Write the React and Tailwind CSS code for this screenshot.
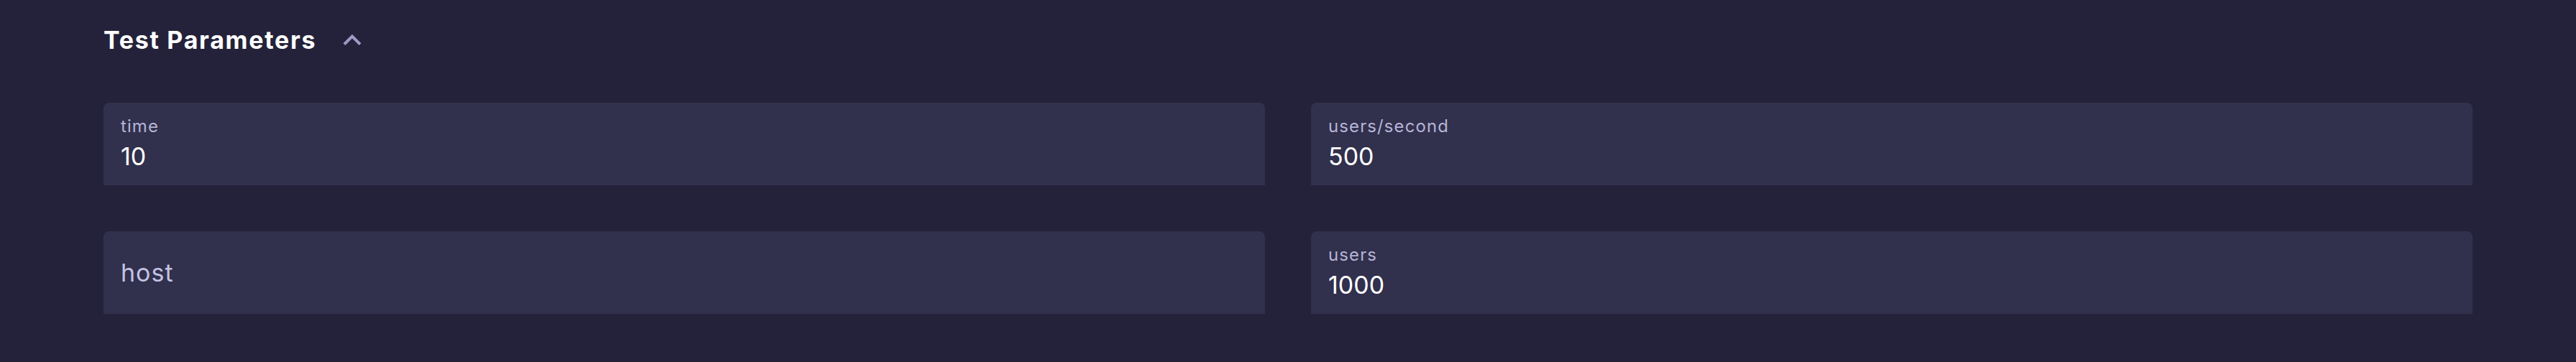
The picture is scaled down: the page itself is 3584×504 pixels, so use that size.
import React from "react";

const fields = [
  { label: "time", value: "10" },
  { label: "users/second", value: "500" },
  { label: "host", value: "" },
  { label: "users", value: "1000" },
];

function ExpandLess() {
  return (
    <svg viewBox="0 0 24 24" className="w-[50px] h-[50px] text-[#9d9bc4]" fill="currentColor">
      <path d="M12 8l-6 6 1.41 1.41L12 10.83l4.59 4.58L18 14z" />
    </svg>
  );
}

function Field({ label, value }) {
  // empty field shows the label as placeholder, like an unfocused filled input
  if (!value) {
    return (
      <div className="h-[115px] rounded-t-[8px] bg-[#31304d] px-6 pt-[41px]">
        <div className="text-[34px] leading-[34px] tracking-[1px] text-[#c4c2e2]">{label}</div>
      </div>
    );
  }
  return (
    <div className="h-[115px] rounded-t-[8px] bg-[#31304d] px-6 pt-[21px]">
      <div className="text-[24px] leading-[24px] tracking-[1.1px] text-[#b6b4d6]">{label}</div>
      <div className="mt-[13px] text-[34px] leading-[34px] text-white">{value}</div>
    </div>
  );
}

export default function App() {
  return (
    <div
      className="h-[504px] w-full bg-[#24223a] px-[144px] pt-[39px]"
      style={{ fontFamily: "Inter, 'Noto Sans', sans-serif" }}
    >
      <div className="flex items-center h-[34px]">
        <h2 className="text-[34px] leading-[34px] font-bold tracking-[1.7px] text-white">Test Parameters</h2>
        <div className="ml-[25px] flex items-center">
          <ExpandLess />
        </div>
      </div>

      <div className="mt-[70px] grid grid-cols-2 gap-x-[64px] gap-y-[64px]">
        {fields.map((f) => (
          <Field key={f.label} label={f.label} value={f.value} />
        ))}
      </div>
    </div>
  );
}
